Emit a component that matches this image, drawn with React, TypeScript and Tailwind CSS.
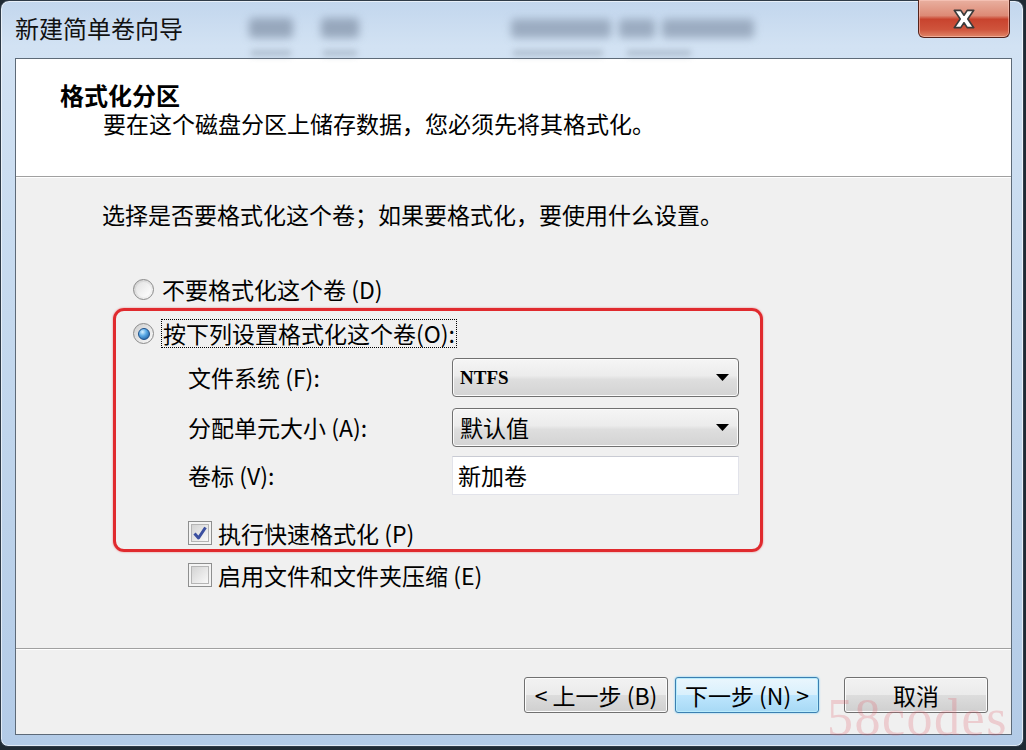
import React from "react";

const CJK = "font-['Noto_Sans_CJK_SC',sans-serif]";

function Radio({ checked }: { checked?: boolean }) {
  return (
    <div className="w-[21px] h-[21px] rounded-full border border-[#8a8a8a] bg-linear-to-br from-[#cfcfcf] to-[#fafafa] flex items-center justify-center shrink-0">
      {checked ? (
        <div className="w-[12px] h-[12px] rounded-full border border-[#1b4f8a] bg-[radial-gradient(circle_at_35%_30%,#d6f0ff_0%,#5aaae6_40%,#124b8e_100%)]" />
      ) : (
        <div className="w-[15px] h-[15px] rounded-full bg-linear-to-br from-[#e2e2e2] to-[#ffffff]" />
      )}
    </div>
  );
}

function Check({ checked }: { checked?: boolean }) {
  return (
    <div className="w-[24px] h-[24px] border border-[#8e8f8f] bg-[#f4f4f4] p-[2px] shrink-0">
      <div className="w-full h-full border border-[#b5b5b5] bg-linear-to-br from-[#d4d4d4] to-[#f9f9f9] flex items-center justify-center">
        {checked && (
          <svg width="16" height="16" viewBox="0 0 16 16">
            <path d="M2.5 8.5 L6.5 13 L13.5 2.5" stroke="#3b4fa0" strokeWidth="3" fill="none" strokeLinejoin="round" />
          </svg>
        )}
      </div>
    </div>
  );
}

function Combo({ children }: { children: React.ReactNode }) {
  return (
    <div className="w-[287px] h-[39px] rounded-[4px] border border-[#707070] bg-[linear-gradient(#f5f5f5,#ececec_45%,#dedede_55%,#d3d3d3)] shadow-[inset_0_0_0_1px_#fbfbfb] flex items-center pl-[7px] pr-[9px]">
      {children}
      <svg className="ml-auto" width="13" height="7" viewBox="0 0 13 7">
        <path d="M0 0H13L6.5 7Z" fill="#000" />
      </svg>
    </div>
  );
}

function Btn({ children, focused }: { children: React.ReactNode; focused?: boolean }) {
  return (
    <div
      className={
        focused
          ? "w-[144px] h-[36px] rounded-[3px] border border-[#3c7fb1] bg-[linear-gradient(#eaf6fd,#d9f0fc_49%,#bee6fd_50%,#a7d9f5)] shadow-[inset_0_0_0_1px_#b9ecfc,0_0_2px_#5fc8f5] flex items-center justify-center text-[23px] leading-none"
          : "w-[144px] h-[36px] rounded-[3px] border border-[#707070] bg-[linear-gradient(#f2f2f2,#ebebeb_49%,#dddddd_50%,#cfcfcf)] shadow-[inset_0_0_0_1px_#fcfcfc] flex items-center justify-center text-[23px] leading-none"
      }
    >
      {children}
    </div>
  );
}

export default function App() {
  return (
    <div className={`w-[1026px] h-[750px] bg-[#1f2a34] relative overflow-hidden text-black ${CJK}`}>
      <div className="w-[1024px] h-[747px] rounded-t-[9px] rounded-b-[8px] border border-[#2f3b48] bg-[linear-gradient(180deg,#c2d6ed_0%,#d2e2f3_6%,#c9dcf0_30%,#bcd2ea_70%,#b3cbe7_100%)] shadow-[inset_0_0_0_1px_rgba(255,255,255,0.6)] flex flex-col relative">
        {/* title bar */}
        <div className="h-[57px] relative shrink-0">
          <div className="pl-[14px] pt-[13px] text-[24px] leading-[28px] text-[#111]">新建简单卷向导</div>
          <div className="absolute left-[248px] top-[17px] w-[44px] h-[20px] bg-[#74849a] opacity-60 blur-[4px] rounded" />
          <div className="absolute left-[320px] top-[17px] w-[38px] h-[20px] bg-[#74849a] opacity-60 blur-[4px] rounded" />
          <div className="absolute left-[510px] top-[18px] w-[100px] h-[19px] bg-[#74849a] opacity-55 blur-[4px] rounded" />
          <div className="absolute left-[618px] top-[18px] w-[36px] h-[19px] bg-[#74849a] opacity-55 blur-[4px] rounded" />
          <div className="absolute left-[661px] top-[18px] w-[92px] h-[19px] bg-[#74849a] opacity-55 blur-[4px] rounded" />
          <div className="absolute left-[250px] top-[49px] w-[40px] h-[6px] bg-[#8c9aab] opacity-50 blur-[3px]" />
          <div className="absolute left-[322px] top-[49px] w-[34px] h-[6px] bg-[#8c9aab] opacity-50 blur-[3px]" />
          <div className="absolute left-[512px] top-[49px] w-[90px] h-[6px] bg-[#8c9aab] opacity-50 blur-[3px]" />
          <div className="absolute left-[626px] top-[49px] w-[64px] h-[6px] bg-[#8c9aab] opacity-50 blur-[3px]" />
          {/* close button */}
          <div className="absolute left-[917px] top-[-1px] w-[92px] h-[38px] rounded-b-[6px] border border-t-0 border-[#55231b] bg-[linear-gradient(#e9b0a0,#dd8a76_42%,#c8432e_52%,#cf543c_80%,#e08668)] shadow-[inset_0_0_0_1px_rgba(255,210,200,0.5)] flex items-center justify-center">
            <svg width="26" height="22" viewBox="0 0 24 20">
              <path d="M3 2 L9 2 L12 6.5 L15 2 L21 2 L15.5 10 L21 18 L15 18 L12 13.5 L9 18 L3 18 L8.5 10 Z" fill="#fff" stroke="#3b3b3b" strokeWidth="1.5" strokeLinejoin="round" />
            </svg>
          </div>
        </div>

        {/* client area */}
        <div className="ml-[14px] mr-[11px] mb-[11px] flex-1 border border-[#5d6a78] bg-[#f0f0f0] flex flex-col">
          {/* header */}
          <div className="h-[117px] bg-white pt-[22px] pl-[44px] shrink-0">
            <div className="text-[24px] leading-[27px] font-bold">格式化分区</div>
            <div className="mt-[1px] pl-[43px] text-[23px] leading-[28px]">要在这个磁盘分区上储存数据，您必须先将其格式化。</div>
          </div>
          <div className="h-[1px] bg-[#a0a0a0] shrink-0" />
          <div className="h-[1px] bg-white shrink-0" />

          {/* body */}
          <div className="flex-1 flex flex-col">
            <div className="mt-[22px] pl-[86px] text-[23px] leading-[28px]">选择是否要格式化这个卷；如果要格式化，要使用什么设置。</div>

            <div className="mt-[47px] ml-[117px] h-[28px] flex items-center gap-[8px]">
              <Radio />
              <span className="text-[23px] leading-none">不要格式化这个卷 (D)</span>
            </div>

            <div className="mt-[5px] ml-[97px] w-[650px] border-[3px] border-[#e02a2e] rounded-[11px] shadow-[0_0_2px_rgba(224,42,46,0.6)] pt-[8px] pb-[2px]">
              <div className="pl-[17px] h-[29px] flex items-center gap-[7px]">
                <Radio checked />
                <span className="h-[29px] flex items-center border border-dotted border-black px-[1px] text-[23px] leading-none">按下列设置格式化这个卷(O):</span>
              </div>
              <div className="mt-[10px] pl-[72px] flex items-center">
                <span className="w-[264px] text-[23px] leading-none">文件系统 (F):</span>
                <Combo>
                  <span className="font-['Liberation_Serif',serif] font-bold text-[19px] leading-none">NTFS</span>
                </Combo>
              </div>
              <div className="mt-[11px] pl-[72px] flex items-center">
                <span className="w-[264px] text-[23px] leading-none">分配单元大小 (A):</span>
                <Combo>
                  <span className="text-[23px] leading-none">默认值</span>
                </Combo>
              </div>
              <div className="mt-[9px] pl-[72px] flex items-center">
                <span className="w-[264px] text-[23px] leading-none">卷标 (V):</span>
                <div className="w-[287px] h-[39px] bg-white border border-[#e2e3ea] border-t-[#c9cbd3] flex items-center pl-[5px] text-[23px] leading-none">新加卷</div>
              </div>
              <div className="mt-[24px] pl-[72px] h-[28px] flex items-center gap-[6px]">
                <Check checked />
                <span className="text-[23px] leading-none">执行快速格式化 (P)</span>
              </div>
            </div>

            <div className="mt-[9px] ml-[172px] h-[28px] flex items-center gap-[6px]">
              <Check />
              <span className="text-[23px] leading-none">启用文件和文件夹压缩 (E)</span>
            </div>
          </div>

          {/* footer */}
          <div className="h-[1px] bg-[#a0a0a0] shrink-0" />
          <div className="h-[1px] bg-white shrink-0" />
          <div className="pt-[27px] pb-[21px] pr-[23px] flex justify-end shrink-0">
            <Btn>&lt; 上一步 (B)</Btn>
            <div className="ml-[7px]">
              <Btn focused>下一步 (N) &gt;</Btn>
            </div>
            <div className="ml-[25px]">
              <Btn>取消</Btn>
            </div>
          </div>
        </div>
      </div>

      {/* watermark */}
      <div className="absolute left-[827px] top-[692px] font-['Liberation_Serif',serif] text-[52px] leading-[52px] tracking-[1.5px] text-[#e0606c]/25 pointer-events-none">
        58codes
      </div>
    </div>
  );
}
